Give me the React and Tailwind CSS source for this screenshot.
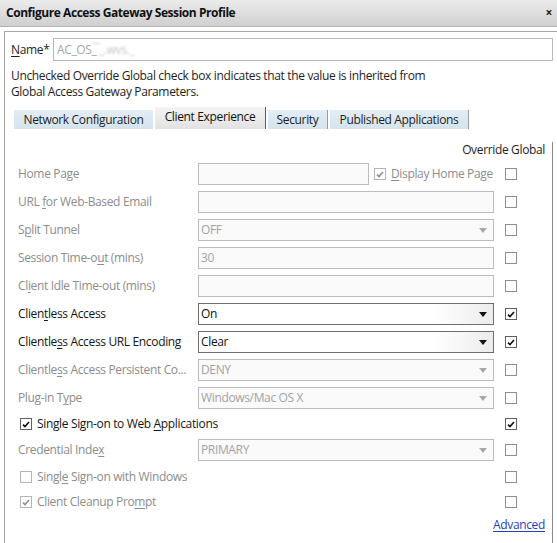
import React from "react";

function U({ children }) {
  return <span className="underline underline-offset-[2px]">{children}</span>;
}

function Box({ checked = false, disabled = false, dark = false }) {
  const border = disabled ? "border-[#b5b5b5]" : dark ? "border-[#5f5f5f]" : "border-[#8e8e8e]";
  const stroke = disabled ? "#8f8f8f" : "#111";
  return (
    <span className={`flex h-[12px] w-[12px] shrink-0 items-center justify-center border bg-white ${border}`}>
      {checked && (
        <svg width="8" height="7" viewBox="0 0 8 7">
          <path d="M1 3.6 L3 5.6 L7 1" fill="none" stroke={stroke} strokeWidth="1.6" />
        </svg>
      )}
    </span>
  );
}

function Arrow({ disabled }) {
  return (
    <svg width="8" height="5" viewBox="0 0 8 5" className="shrink-0">
      <path d="M0 0 H8 L4 5 Z" fill={disabled ? "#a8a8a8" : "#111"} />
    </svg>
  );
}

function Field({ value = "", select = false, disabled = true, className = "w-[296px]" }) {
  const base = disabled
    ? "border-[#bcbcbc] bg-[#fafafa] text-[#a3a3a3]"
    : "border-[#6f6f6f] bg-linear-to-r from-white from-80% to-[#ececec] text-[#111]";
  return (
    <div className={`flex h-[22px] shrink-0 items-center justify-between border pl-[2px] pr-[6px] ${base} ${className}`}>
      <span>{value}</span>
      {select && <Arrow disabled={disabled} />}
    </div>
  );
}

function Row({ label, disabled = true, h = "h-[28px]", overrideChecked = false, children }) {
  return (
    <div className={`flex items-center ${h}`}>
      <div className={`w-[180px] shrink-0 whitespace-nowrap ${disabled ? "text-[#8c8c8c]" : "text-[#151515]"}`}>
        {label}
      </div>
      <div className="w-[296px] shrink-0">{children}</div>
      <div className="ml-[11px]">
        <Box checked={overrideChecked} dark={overrideChecked} />
      </div>
    </div>
  );
}

function CheckRow({ label, checked, disabled, h, overrideChecked = false }) {
  return (
    <div className={`flex items-center ${h}`}>
      <div className={`flex w-[476px] shrink-0 items-center gap-[5px] pl-[2px] whitespace-nowrap ${disabled ? "text-[#8c8c8c]" : "text-[#151515]"}`}>
        <Box checked={checked} disabled={disabled} dark={!disabled} />
        <span>{label}</span>
      </div>
      <div className="ml-[11px]">
        <Box checked={overrideChecked} dark={overrideChecked} />
      </div>
    </div>
  );
}

const tabs = [
  { name: "Network Configuration", w: "w-[139px]", edge: "" },
  { name: "Client Experience", w: "w-[111px]", active: true },
  { name: "Security", w: "w-[60px]", edge: "border-r border-[#9a9a9a]" },
  { name: "Published Applications", w: "w-[139px]", edge: "border-r border-[#9a9a9a]" },
];

export default function App() {
  return (
    <div className="h-[543px] w-[557px] overflow-hidden bg-white font-['Open_Sans',sans-serif] text-[12px] tracking-[-0.35px] text-[#1e1e1e]">
      {/* title bar */}
      <div className="flex h-[27px] items-center justify-between border-b border-[#b3b3b3] bg-linear-to-b from-[#ececec] to-[#cfcfcf] pl-[6px] pr-[5px]">
        <span className="text-[12px] font-bold tracking-[-0.45px] text-[#111]">Configure Access Gateway Session Profile</span>
        <span className="text-[12px] font-bold text-[#222]">×</span>
      </div>

      <div className="ml-[4px] mt-[4px] h-[520px] border-l border-t border-[#a5a5a5]">
        <div className="flex items-center pl-[6px] pt-[6px]">
          <span className="w-[42px]">
            <U>N</U>ame*
          </span>
          <div className="flex h-[23px] w-[500px] items-center border border-[#b9b9b9] pl-[3px] text-[#a6a6a6]">
            AC_OS_<span className="blur-[1.2px] text-[#c4c4c4]">&#773; _.wvs._</span>
          </div>
        </div>

        <p className="mt-[7px] pl-[6px] leading-[16px]">
          Unchecked Override Global check box indicates that the value is inherited from
          <br />
          Global Access Gateway Parameters.
        </p>

        {/* tabs */}
        <div className="ml-[9px] mt-[7px] flex h-[22px] items-end gap-[2px]">
          {tabs.map((t) =>
            t.active ? (
              <div
                key={t.name}
                className={`flex h-[22px] ${t.w} items-center justify-center border-r border-[#5c5c5c] bg-linear-to-b from-[#f4f4f4] to-[#e2e2e2] pb-[2px] text-[#111]`}
              >
                {t.name}
              </div>
            ) : (
              <div
                key={t.name}
                className={`flex h-[19px] ${t.w} items-center justify-center bg-linear-to-b from-[#e3edf5] to-[#d5e3ed] ${t.edge}`}
              >
                {t.name}
              </div>
            )
          )}
        </div>

        {/* tab panel */}
        <div className="ml-[6px] h-[411px] w-[542px] border-b-2 border-r border-b-[#7c7c7c] border-r-[#8a8a8a] pl-[7px]">
          <div className="mb-[2px] mt-[13px] pr-[7px] text-right leading-[16px]">Override Global</div>

          <Row label={<>Home Pa<U>g</U>e</>}>
            <div className="flex items-center">
              <Field className="w-[171px]" />
              <span className="ml-[5px]">
                <Box checked disabled />
              </span>
              <span className="ml-[5px] whitespace-nowrap text-[#8c8c8c]">
                <U>D</U>isplay Home Page
              </span>
            </div>
          </Row>
          <Row label={<>URL <U>f</U>or Web-Based Email</>}>
            <Field />
          </Row>
          <Row label={<>S<U>p</U>lit Tunnel</>}>
            <Field value="OFF" select />
          </Row>
          <Row label={<>Session Time-o<U>u</U>t (mins)</>}>
            <Field value="30" />
          </Row>
          <Row label={<>Cl<U>i</U>ent Idle Time-out (mins)</>}>
            <Field />
          </Row>
          <Row label={<>Clien<U>t</U>less Access</>} disabled={false} overrideChecked>
            <Field value="On" select disabled={false} />
          </Row>
          <Row label={<>Clientle<U>s</U>s Access URL Encoding</>} disabled={false} overrideChecked>
            <Field value="Clear" select disabled={false} />
          </Row>
          <Row label={<>Clientle<U>s</U>s Access Persistent Co...</>}>
            <Field value="DENY" select />
          </Row>
          <Row label={<>Plug-in T<U>y</U>pe</>}>
            <Field value="Windows/Mac OS X" select />
          </Row>

          <CheckRow
            h="h-[24px]"
            checked
            label={<>Single Sign-on to Web <U>A</U>pplications</>}
            overrideChecked
          />
          <Row label={<>Credential Inde<U>x</U></>}>
            <Field value="PRIMARY" select />
          </Row>
          <CheckRow h="h-[26px]" disabled label={<>Singl<U>e</U> Sign-on with Windows</>} />
          <CheckRow h="h-[24px]" disabled checked label={<>Client Cleanup Pro<U>m</U>pt</>} />

          <div className="flex h-[22px] items-center justify-end pr-[7px]">
            <span className="text-[#1f3fc4] underline underline-offset-[2px]">Advanced</span>
          </div>
        </div>
      </div>
    </div>
  );
}
